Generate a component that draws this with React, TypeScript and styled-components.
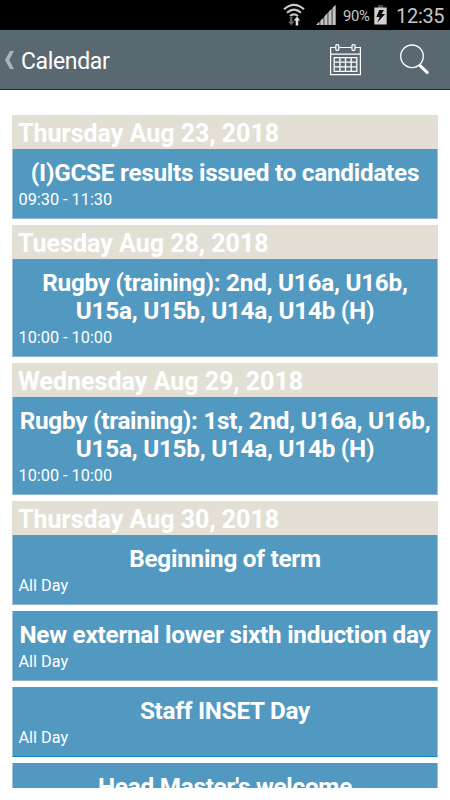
import React from "react";
import styled, { createGlobalStyle } from "styled-components";

const GlobalStyle = createGlobalStyle`
  *, *::before, *::after { box-sizing: border-box; }
  html, body { margin: 0; padding: 0; background: #fff; }
  body { font-family: Roboto, "Liberation Sans", sans-serif; overflow: hidden; }
`;

const Screen = styled.div`
  display: flex;
  flex-direction: column;
  width: 450px;
  height: 800px;
  background: #fff;
  overflow: hidden;
`;

const StatusBar = styled.div`
  display: flex;
  justify-content: flex-end;
  align-items: center;
  flex: none;
  height: 30px;
  padding-right: 6px;
  background: #000;
  color: #c6c6c6;

  svg { display: block; flex: none; }
`;

const BatteryLevel = styled.span`
  width: 28px;
  margin: 2px 3px 0 7px;
  font-size: 14.8px;
  line-height: 20px;
  letter-spacing: -0.3px;
  white-space: nowrap;
`;

const Clock = styled.span`
  width: 48px;
  margin: 2px 0 0 9px;
  font-size: 20px;
  line-height: 24px;
  letter-spacing: -0.3px;
  white-space: nowrap;
`;

const AppBar = styled.header`
  display: flex;
  align-items: center;
  flex: none;
  height: 60px;
  padding: 0 20px 0 5px;
  background: #5a6971;
  border-bottom: 1px solid #0b3944;

  svg { display: block; flex: none; }
`;

const Title = styled.h1`
  flex: 1;
  margin: 4px 0 0 7px;
  font-size: 23px;
  font-weight: 400;
  line-height: 30px;
  letter-spacing: -0.35px;
  color: #fff;
`;

const Actions = styled.div`
  display: flex;
  align-items: center;
  gap: 39px;
`;

const Agenda = styled.main`
  display: flex;
  flex-direction: column;
  gap: 6px;
  flex: none;
  height: 673px;
  margin: 25px 12px 0;
  overflow: hidden;
`;

const Day = styled.section`
  display: flex;
  flex-direction: column;
  flex: none;
  gap: 6px;
`;

const DayHeading = styled.h2`
  height: 34px;
  margin: 0 0 -6px;
  padding: 3px 6px 0;
  background: #e3dfd5;
  color: #fff;
  font-size: 25px;
  font-weight: 700;
  line-height: 32px;
  white-space: nowrap;
`;

const EventCard = styled.article<{ $edge?: string }>`
  flex: none;
  padding: 10px 0 8px;
  border: solid #a6c1d6;
  border-width: 0 1px 1px;
  border-bottom-color: ${(p) => p.$edge ?? "#8fb6d2"};
  background: #5299c1;
  color: #fff;
`;

const EventTitle = styled.h3`
  margin: 0;
  font-size: 24.3px;
  font-weight: 700;
  line-height: 28px;
  letter-spacing: -0.26px;
  text-align: center;
  white-space: pre;
`;

const EventTime = styled.p`
  margin: 2px 0 0;
  padding-left: 5.5px;
  font-size: 16.3px;
  line-height: 21px;
`;

type CalendarEvent = { title: string; time: string; edge?: string };

const days: { date: string; events: CalendarEvent[] }[] = [
  {
    date: "Thursday Aug 23, 2018",
    events: [{ title: "(I)GCSE results issued to candidates", time: "09:30 - 11:30" }],
  },
  {
    date: "Tuesday Aug 28, 2018",
    events: [
      { title: "Rugby (training): 2nd, U16a, U16b,\nU15a, U15b, U14a, U14b (H)", time: "10:00 - 10:00" },
    ],
  },
  {
    date: "Wednesday Aug 29, 2018",
    events: [
      { title: "Rugby (training): 1st, 2nd, U16a, U16b,\nU15a, U15b, U14a, U14b (H)", time: "10:00 - 10:00" },
    ],
  },
  {
    date: "Thursday Aug 30, 2018",
    events: [
      { title: "Beginning of term", time: "All Day" },
      { title: "New external lower sixth induction day", time: "All Day" },
      { title: "Staff INSET Day", time: "All Day", edge: "#0d8bb9" },
      { title: "Head Master's welcome", time: "" },
    ],
  },
];

const WifiIcon = () => (
  <svg width="22" height="24" viewBox="0 0 22 24" fill="none">
    <g stroke="#c9c9c9" strokeWidth="2.1">
      <path d="M1 6.2Q11-2.6 21 6.2" />
      <path d="M4 9.7Q11 3.6 18 9.7" />
      <path d="M7 13Q11 9.6 15 13" />
    </g>
    <path d="M14 13.5l3.2 4h-2v5h-2.5v-5h-2z" fill="#e2e2e2" />
    <path d="M8.3 22.5l-3.2-4h2v-4.5h2.4v4.5h2z" fill="#666" />
  </svg>
);

const SignalIcon = () => (
  <svg width="20" height="22" viewBox="0 0 20 22" fill="#c4c4c4">
    <path d="M0 21L3.5 17.5V21zM4.3 16.7L7.6 13.4V21H4.3zM8.3 12.4L11.6 8.8V21H8.3zM12.3 8.2L15.7 4.8V21h-3.4zM16.4 4L19.7 0.7V21h-3.3z" />
  </svg>
);

const BatteryIcon = () => (
  <svg width="13" height="20" viewBox="0 0 13 20">
    <path d="M4 0h5v3H4z" fill="#4a4a4a" />
    <path d="M0.3 2.5h12.4v17H0.3z" fill="#d0d0d0" />
    <path d="M5.3 5h4.6L7.6 9h3.5L3.2 17.8 5.6 12H2.3z" fill="#080808" />
  </svg>
);

const BackIcon = () => (
  <svg width="9" height="18" viewBox="0 0 9 18">
    <path d="M5 0h4L4.2 9 9 18H5L0 9z" fill="#adb4b8" />
  </svg>
);

const CalendarIcon = () => (
  <svg width="31" height="32" viewBox="0 0 31 32" fill="none" stroke="#fff">
    <path d="M5.5 3.5H.6v27.2h29.8V3.5h-4.9M9.5 3.5h12M.6 10.2h29.8" strokeWidth="1.2" />
    <rect x="5.8" y=".7" width="3" height="5.6" rx="1" strokeWidth="1.3" />
    <rect x="22" y=".7" width="3" height="5.6" rx="1" strokeWidth="1.3" />
    <path d="M4.2 13.7h22.6v13.6H4.2zM4.2 18.2h22.6M4.2 22.8h22.6M9.9 13.7v13.6M15.5 13.7v13.6M21.2 13.7v13.6" strokeWidth="1.3" />
  </svg>
);

const SearchIcon = () => (
  <svg width="30" height="31" viewBox="0 0 30 31" fill="none" stroke="#fff">
    <circle cx="12" cy="12.3" r="11.3" strokeWidth="1.3" />
    <path d="M19.3 20.9l8.8 8.5" strokeWidth="3" />
  </svg>
);

const SignalGroup = styled.div`
  display: flex;
  align-items: center;
  gap: 11px;
`;

export default function App() {
  return (
    <Screen>
      <GlobalStyle />
      <StatusBar>
        <SignalGroup>
          <WifiIcon />
          <SignalIcon />
        </SignalGroup>
        <BatteryLevel>90%</BatteryLevel>
        <BatteryIcon />
        <Clock>12:35</Clock>
      </StatusBar>
      <AppBar>
        <BackIcon />
        <Title>Calendar</Title>
        <Actions>
          <CalendarIcon />
          <SearchIcon />
        </Actions>
      </AppBar>
      <Agenda>
        {days.map((day) => (
          <Day key={day.date}>
            <DayHeading>{day.date}</DayHeading>
            {day.events.map((event) => (
              <EventCard key={event.title} $edge={event.edge}>
                <EventTitle>{event.title}</EventTitle>
                {event.time && <EventTime>{event.time}</EventTime>}
              </EventCard>
            ))}
          </Day>
        ))}
      </Agenda>
    </Screen>
  );
}
